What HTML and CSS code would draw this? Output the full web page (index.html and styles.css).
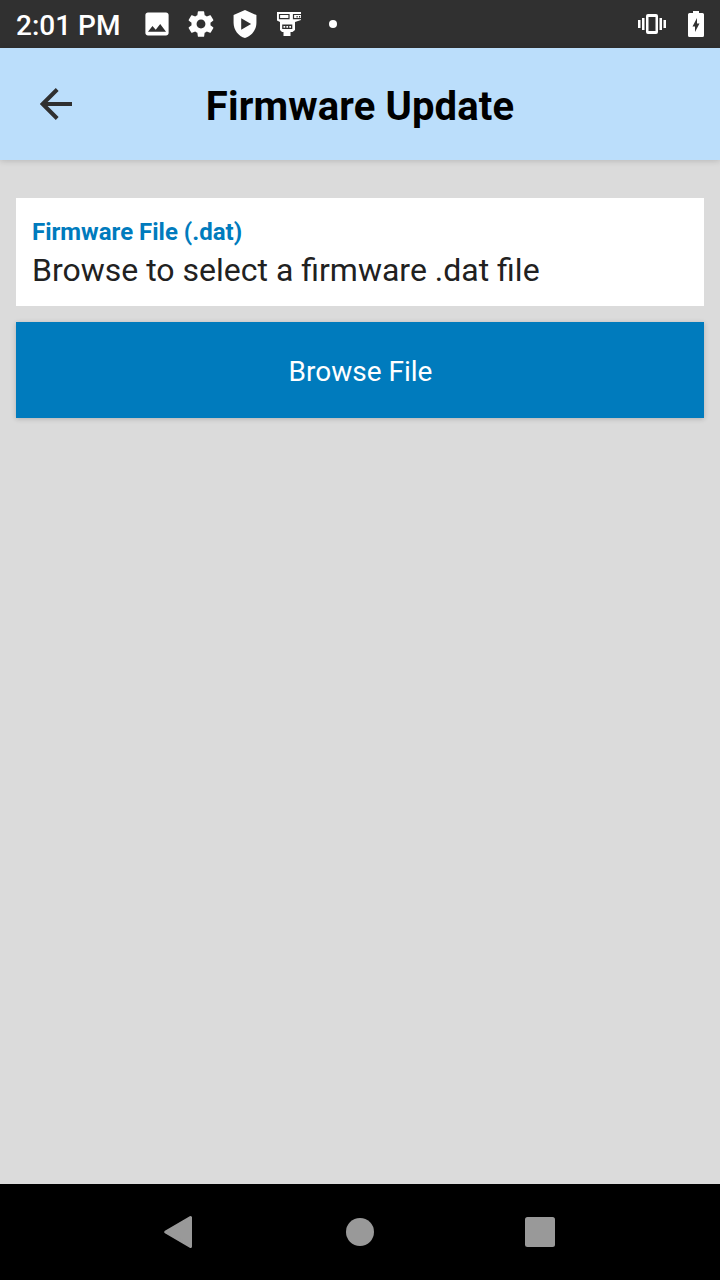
FILE: index.html
```html
<!DOCTYPE html>
<html lang="en">
<head>
<meta charset="utf-8">
<title>Firmware Update</title>
<link rel="stylesheet" href="styles.css">
</head>
<body>
<div class="screen">
  <div class="status-bar">
    <span class="clock">2:01 PM</span>
    <div class="notifications">
      <svg class="status-icon" viewBox="-.4 -.4 24.800 24.800"><path d="M21 19V5c0-1.100-.9-2-2-2H5c-1.100 0-2 .9-2 2v14c0 1.100.9 2 2 2h14c1.100 0 2-.9 2-2zM8.500 13.500l2.500 3.010L14.500 12l4.500 6H5l3.500-4.500z"/></svg>
      <svg class="status-icon" viewBox="-.6 -.6 25.200 25.200"><path d="M19.430 12.980c.04-.32.07-.64.07-.98s-.03-.66-.07-.98l2.110-1.650c.19-.15.24-.42.12-.64l-2-3.460c-.12-.22-.39-.3-.61-.22l-2.490 1c-.52-.4-1.080-.73-1.690-.98l-.38-2.650C14.460 2.180 14.250 2 14 2h-4c-.25 0-.46.18-.49.42l-.38 2.650c-.61.25-1.170.59-1.690.98l-2.490-1c-.23-.09-.49 0-.61.22l-2 3.460c-.13.22-.07.49.12.64l2.110 1.650c-.04.32-.07.65-.07.98s.03.66.07.98l-2.110 1.650c-.19.15-.24.42-.12.64l2 3.460c.12.22.39.3.61.22l2.490-1c.52.4 1.080.73 1.690.98l.38 2.650c.03.24.24.42.49.42h4c.25 0 .46-.18.49-.42l.38-2.650c.61-.25 1.170-.59 1.690-.98l2.490 1c.23.09.49 0 .61-.22l2-3.460c.12-.22.07-.49-.12-.64l-2.110-1.650zM12 15.500c-1.930 0-3.500-1.570-3.500-3.500s1.570-3.500 3.500-3.500 3.500 1.570 3.500 3.500-1.570 3.500-3.500 3.500z"/></svg>
      <svg class="status-icon" viewBox="-.6 -.6 25.200 25.200"><path fill-rule="evenodd" d="M12 1 3 5v6c0 5.550 3.840 10.740 9 12 5.160-1.260 9-6.450 9-12V5zM9 7.500v9l7.800-4.500z"/></svg>
      <svg class="status-icon" viewBox="0 0 32 32">
        <path d="M4 4H28V12L22 14V22L19.500 24H17.500V28H10.500V24H9L7 22V14L4 12.500z"/>
        <path class="cutout-line" d="M6.500 6.500H16V10.700H6.500zM28 6.500H20.500V10.700H28"/>
        <path class="cutout" d="M23.500 8H24.700V9.500H23.500zM26 8H27.200V9.500H26zM9.200 16.500H19.300V21H9.200z"/>
        <path d="M10.500 18H12.200V19.700H10.500zM13.400 18H15.100V19.700H13.400zM16.300 18H18V19.700H16.300z"/>
      </svg>
      <svg class="status-icon" viewBox="0 0 32 32"><circle cx="16" cy="16" r="4"/></svg>
    </div>
    <div class="system-icons">
      <svg class="status-icon" viewBox="0 0 32 32"><path d="M2 12h2.500v8H2zM6 10h2.500v12H6zM23.500 10H26v12h-2.500zM27.500 12H30v8h-2.500z"/><path fill-rule="evenodd" d="M12 6h8q2 0 2 2v16q0 2-2 2h-8q-2 0-2-2V8q0-2 2-2zM12.500 9v14h7V9z"/></svg>
      <svg class="battery" viewBox="0 0 16 26"><path fill-rule="evenodd" d="M5 0h6v2h3.500Q16 2 16 3.500v21Q16 26 14.500 26h-13Q0 26 0 24.500v-21Q0 2 1.500 2H5zM9 7 4.500 15.500H7V21l4.500-8.500H9z"/></svg>
    </div>
  </div>
  <header class="app-bar">
    <svg class="back" viewBox="0 0 32 32"><path d="M32 16H3M17.200 1.500 2.700 16l14.500 14.500"/></svg>
    <h1 class="title">Firmware Update</h1>
  </header>
  <main class="content">
    <section class="file-card">
      <div class="file-label">Firmware File (.dat)</div>
      <div class="file-value">Browse to select a firmware .dat file</div>
    </section>
    <button class="browse" type="button">Browse File</button>
  </main>
  <nav class="nav-bar">
    <svg class="nav-icon" viewBox="0 0 36 36"><path class="nav-back" d="M3.700 18 28.500 3.500v29z"/></svg>
    <svg class="nav-icon" viewBox="0 0 36 36"><circle cx="18" cy="18" r="14"/></svg>
    <svg class="nav-icon" viewBox="0 0 36 36"><rect x="3" y="3" width="30" height="30" rx="2.500"/></svg>
  </nav>
</div>
</body>
</html>
```
FILE: styles.css
```css
* { box-sizing: border-box; }
body { margin: 0; font-family: Roboto, sans-serif; }
svg { display: block; flex: none; }
.screen { width: 720px; height: 1280px; display: flex; flex-direction: column; background: #dbdbdb; overflow: hidden; }
.status-bar { height: 48px; flex: none; display: flex; align-items: center; padding: 0 16px; background: #303030; color: #fff; fill: #fff; }
.clock { width: 125px; font-size: 28px; line-height: 32px; font-weight: 500; padding-top: 3px; white-space: nowrap; }
.notifications { display: flex; gap: 12px; }
.status-icon { width: 32px; height: 32px; }
.cutout { fill: #303030; }
.cutout-line { fill: none; stroke: #303030; stroke-width: 1.2; }
.system-icons { display: flex; align-items: center; gap: 20px; margin-left: auto; }
.battery { width: 16px; height: 26px; }
.app-bar { height: 112px; flex: none; display: grid; grid-template-columns: 80px 1fr 80px; align-items: center; background: #bbdefb; box-shadow: 0 1px 6px rgba(0, 0, 0, .16); }
.back { width: 32px; height: 32px; margin-left: 40px; fill: none; stroke: #303030; stroke-width: 4; }
.title { margin: 6px 0 0; font-size: 40px; line-height: 48px; font-weight: 700; letter-spacing: .13px; text-align: center; color: #000; }
.content { flex: 1; padding: 38px 16px 0; display: flex; flex-direction: column; gap: 16px; }
.file-card { height: 108px; padding: 19px 16px 0; background: #fff; }
.file-label { font-size: 24px; line-height: 30px; font-weight: 700; color: #007bbd; }
.file-value { font-size: 32px; line-height: 38px; margin-top: 4px; color: #212121; white-space: nowrap; }
.browse { height: 96px; border: 0; padding: 3px 0 0 1px; background: #007bbd; color: #fff; font: 400 28px/34px Roboto, sans-serif; box-shadow: 0 1px 5px rgba(0, 0, 0, .2); }
.nav-bar { height: 96px; flex: none; display: flex; justify-content: center; align-items: center; gap: 144px; background: #000; fill: #999; }
.nav-icon { width: 36px; height: 36px; }
.nav-back { stroke: #999; stroke-width: 3; stroke-linejoin: round; }
```
